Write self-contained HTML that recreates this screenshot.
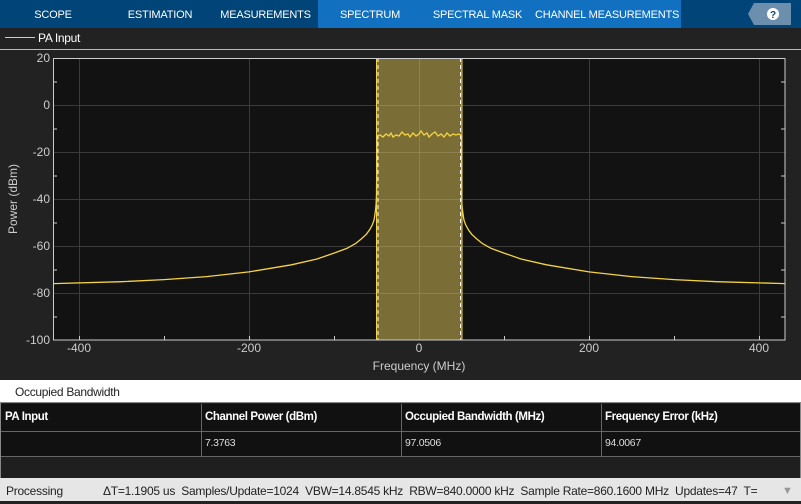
<!DOCTYPE html>
<html><head><meta charset="utf-8"><style>
*{margin:0;padding:0;box-sizing:border-box}
body{width:801px;height:501px;overflow:hidden;background:#222;font-family:"Liberation Sans",sans-serif;position:relative}
.abs{position:absolute;white-space:nowrap}
.tab{position:absolute;top:0;height:28px;line-height:30px;color:#fff;font-size:11px;text-align:center;white-space:nowrap;letter-spacing:-0.2px}
.th{position:absolute;top:411px;color:#fff;font-size:11.5px;font-weight:bold;letter-spacing:-0.4px;white-space:nowrap}
.td{position:absolute;top:437px;color:#ddd;font-size:10.5px;letter-spacing:-0.3px}
</style></head><body>
<div class="abs" style="left:0;top:0;width:801px;height:28px;background:#004478"></div>
<div class="abs" style="left:318px;top:0;width:363px;height:28px;background:#1170c0"></div>
<div class="tab" style="left:20px;width:66px">SCOPE</div>
<div class="tab" style="left:115px;width:90px">ESTIMATION</div>
<div class="tab" style="left:218px;width:95px">MEASUREMENTS</div>
<div class="tab" style="left:330px;width:80px">SPECTRUM</div>
<div class="tab" style="left:430px;width:95px">SPECTRAL MASK</div>
<div class="tab" style="left:535px;width:143px">CHANNEL MEASUREMENTS</div>
<svg class="abs" style="left:748px;top:3px" width="44" height="22"><polygon points="6,0 43,0 43,22 6,22 0,11" fill="#6d8fae"/><circle cx="25" cy="11" r="6" fill="#fff"/><text x="25" y="15" font-size="10" font-weight="bold" text-anchor="middle" fill="#004478" font-family="Liberation Sans">?</text></svg>
<div class="abs" style="left:5px;top:37px;width:30px;height:1px;background:#f5d442"></div>
<div class="abs" style="left:38px;top:31px;color:#fff;font-size:12px;letter-spacing:-0.3px">PA Input</div>
<div class="abs" style="left:0;top:49px;width:801px;height:1px;background:#bbb"></div>
<svg class="abs" style="left:0;top:0" width="801" height="381">
<rect x="53" y="58" width="732" height="282" fill="#121212"/>
<g stroke="#3a3a3a" stroke-width="1">
<line x1="53" y1="105.5" x2="785" y2="105.5"/><line x1="53" y1="152.5" x2="785" y2="152.5"/><line x1="53" y1="199.5" x2="785" y2="199.5"/><line x1="53" y1="246.5" x2="785" y2="246.5"/><line x1="53" y1="293.5" x2="785" y2="293.5"/>
<line x1="79.5" y1="58" x2="79.5" y2="340"/><line x1="249.5" y1="58" x2="249.5" y2="340"/><line x1="419.5" y1="58" x2="419.5" y2="340"/><line x1="589.5" y1="58" x2="589.5" y2="340"/><line x1="759.5" y1="58" x2="759.5" y2="340"/>
</g>
<rect x="376.5" y="58" width="85.5" height="282" fill="#7a6e36"/>
<line x1="419.5" y1="58" x2="419.5" y2="340" stroke="#8d8250"/>
<g stroke="#8d8250"><line x1="377" y1="105.5" x2="462" y2="105.5"/><line x1="377" y1="152.5" x2="462" y2="152.5"/><line x1="377" y1="199.5" x2="462" y2="199.5"/><line x1="377" y1="246.5" x2="462" y2="246.5"/><line x1="377" y1="293.5" x2="462" y2="293.5"/></g>
<line x1="376.5" y1="58" x2="376.5" y2="340" stroke="#f5d442"/>
<line x1="462" y1="58" x2="462" y2="340" stroke="#f5d442"/>
<line x1="378" y1="58" x2="378" y2="340" stroke="#fff" stroke-dasharray="4,3"/>
<line x1="460.5" y1="58" x2="460.5" y2="340" stroke="#fff" stroke-dasharray="4,3"/>
<path fill="none" stroke="#f5d442" stroke-width="1.3" d="M53.5,283.6 L121.5,281.7 L164,279.6 L206.5,276.6 L249,271.9 L291.5,264.8 L317,259 L334,253.1 L346.8,248.4 L355.3,243.7 L361.2,239 L366.3,234.3 L369.7,229.6 L372.3,224.9 L374,220.2 L374.8,215.4 L375.7,208.4 L376.1,203.7 L376.5,194.3 L376.8,163.8 L377,136 L380,135 L383,137 L386,134 L389,136 L391,133 L393,137 L396,135 L399,136 L402,132 L405,135 L408,134 L410,137 L413,133 L416,136 L419,134 L421,131 L424,135 L427,133 L429,137 L432,134 L435,132 L438,136 L441,134 L444,137 L447,133 L450,136 L453,134 L456,135 L459,134 L461.5,136 L461.7,163.8 L461.5,194.3 L461.9,203.7 L462.3,208.4 L463.2,215.4 L464,220.2 L465.7,224.9 L468.3,229.6 L471.7,234.3 L476.8,239 L482.7,243.7 L491.2,248.4 L504,253.1 L521,259 L546.5,264.8 L589,271.9 L631.5,276.6 L674,279.6 L716.5,281.7 L785,283.6"/>
<rect x="53.5" y="58.5" width="731.5" height="281.5" fill="none" stroke="#ccc"/>
<g stroke="#ccc"><line x1="79.5" y1="336" x2="79.5" y2="340"/><line x1="164.5" y1="336" x2="164.5" y2="340"/><line x1="249.5" y1="336" x2="249.5" y2="340"/><line x1="334.5" y1="336" x2="334.5" y2="340"/><line x1="504.5" y1="336" x2="504.5" y2="340"/><line x1="589.5" y1="336" x2="589.5" y2="340"/><line x1="674.5" y1="336" x2="674.5" y2="340"/><line x1="759.5" y1="336" x2="759.5" y2="340"/>
<line x1="53" y1="82" x2="57" y2="82"/><line x1="53" y1="129" x2="57" y2="129"/><line x1="53" y1="176" x2="57" y2="176"/><line x1="53" y1="223" x2="57" y2="223"/><line x1="53" y1="270" x2="57" y2="270"/><line x1="53" y1="317" x2="57" y2="317"/>
<line x1="781" y1="82" x2="785" y2="82"/><line x1="781" y1="129" x2="785" y2="129"/><line x1="781" y1="176" x2="785" y2="176"/><line x1="781" y1="223" x2="785" y2="223"/><line x1="781" y1="270" x2="785" y2="270"/><line x1="781" y1="317" x2="785" y2="317"/></g>
<g fill="#ccc" font-size="12" font-family="Liberation Sans" text-anchor="end">
<text x="50" y="62">20</text><text x="50" y="109">0</text><text x="50" y="156">-20</text><text x="50" y="203">-40</text><text x="50" y="250">-60</text><text x="50" y="297">-80</text><text x="50" y="344">-100</text></g>
<g fill="#ccc" font-size="12" font-family="Liberation Sans" text-anchor="middle">
<text x="79" y="352">-400</text><text x="249" y="352">-200</text><text x="419" y="352">0</text><text x="589" y="352">200</text><text x="759" y="352">400</text>
<text x="419" y="370">Frequency (MHz)</text>
<text transform="translate(17,199) rotate(-90)">Power (dBm)</text></g>
</svg>
<div class="abs" style="left:0;top:380px;width:801px;height:22px;background:#fff;color:#222;font-size:12px;line-height:24px;padding-left:15px;letter-spacing:-0.3px">Occupied Bandwidth</div>
<div class="abs" style="left:0;top:402px;width:801px;height:76px;background:#1f1f1f;border-top:1px solid #888;border-left:1px solid #888;border-right:1px solid #888"></div>
<div class="abs" style="left:1px;top:404px;width:799px;height:52px;background:#111"></div>
<div class="abs" style="left:1px;top:431px;width:799px;height:1px;background:#666"></div>
<div class="abs" style="left:1px;top:456px;width:799px;height:1px;background:#666"></div>
<div class="abs" style="left:201px;top:404px;width:1px;height:52px;background:#666"></div>
<div class="abs" style="left:401px;top:404px;width:1px;height:52px;background:#666"></div>
<div class="abs" style="left:601px;top:404px;width:1px;height:52px;background:#666"></div>
<div class="th" style="left:5px">PA Input</div>
<div class="th" style="left:205px">Channel Power (dBm)</div>
<div class="th" style="left:405px">Occupied Bandwidth (MHz)</div>
<div class="th" style="left:605px">Frequency Error (kHz)</div>
<div class="td" style="left:205px">7.3763</div>
<div class="td" style="left:405px">97.0506</div>
<div class="td" style="left:605px">94.0067</div>
<div class="abs" style="left:0;top:478px;width:801px;height:23px;background:#e6e6e6;color:#222;font-size:12px;line-height:26px;letter-spacing:-0.25px"><span style="position:absolute;left:6px">Processing</span><span style="position:absolute;left:103px">ΔT=1.1905 us&nbsp; Samples/Update=1024&nbsp; VBW=14.8545 kHz&nbsp; RBW=840.0000 kHz&nbsp; Sample Rate=860.1600 MHz&nbsp; Updates=47&nbsp; T=</span><span style="position:absolute;left:782px;color:#999;font-size:11px">▼</span></div>
</body></html>
